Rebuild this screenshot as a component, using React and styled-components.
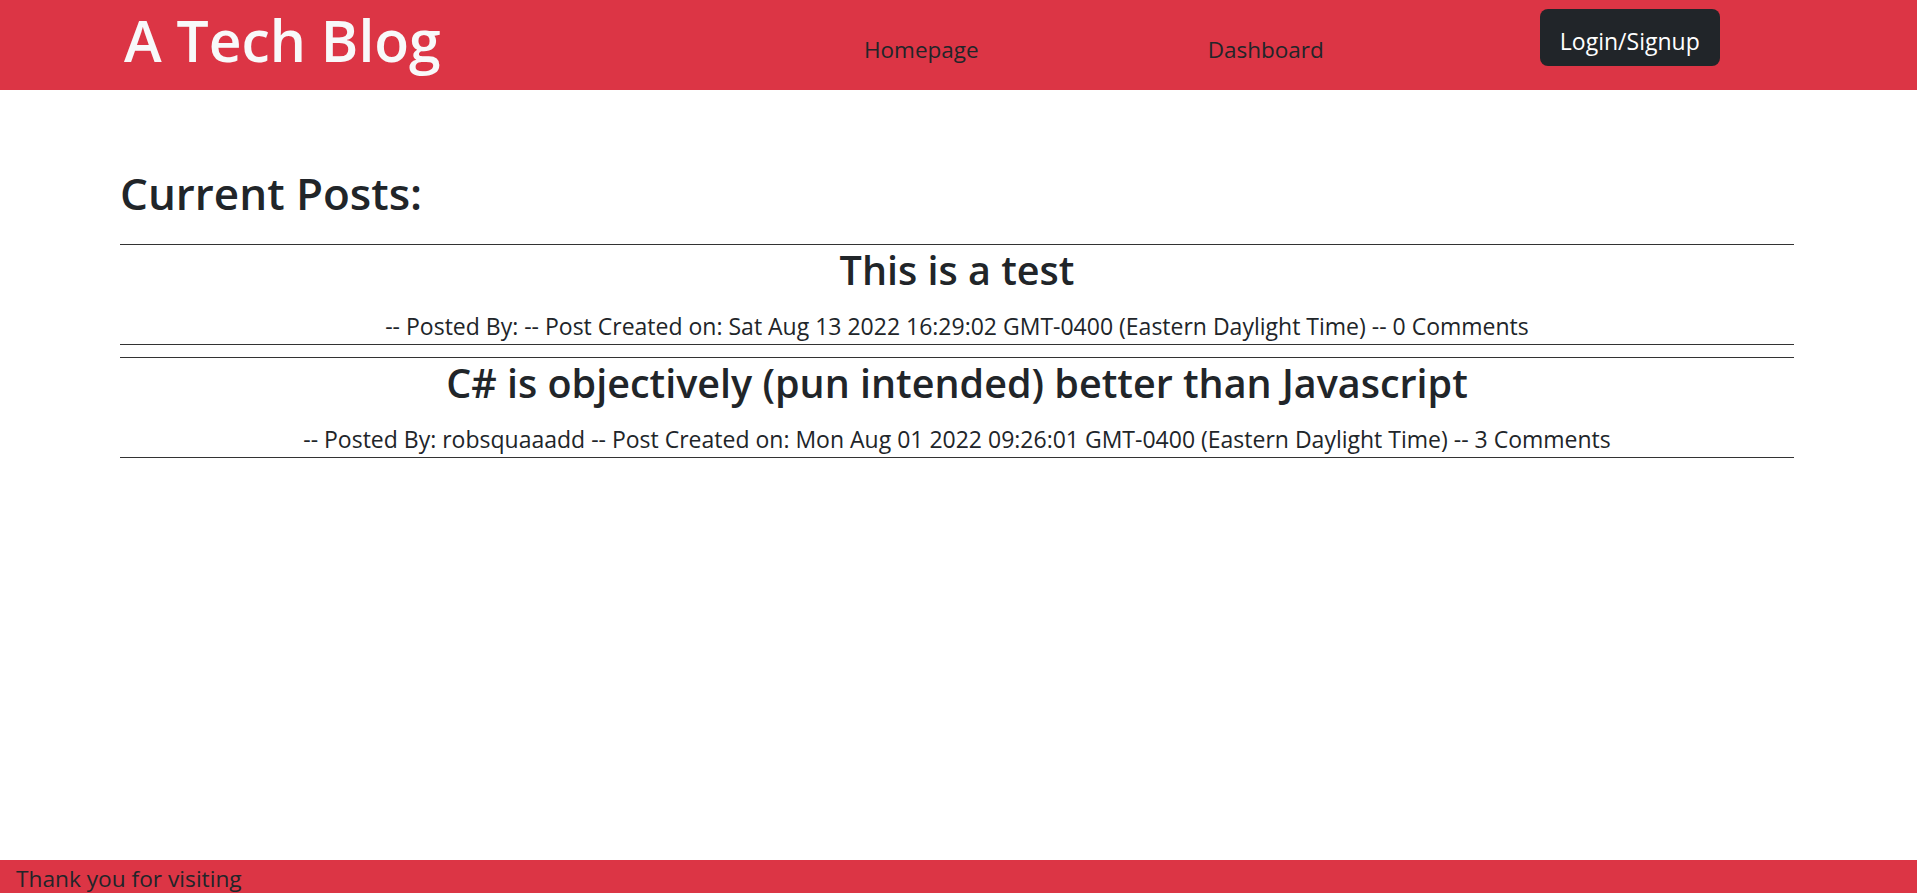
import React from 'react';
import styled, { createGlobalStyle } from 'styled-components';

const GlobalStyle = createGlobalStyle`
  html, body {
    margin: 0;
    padding: 0;
    background: #fff;
  }
  body {
    font-family: "Open Sans", "Liberation Sans", sans-serif;
    color: #212529;
  }
  * {
    box-sizing: border-box;
  }
`;

const Page = styled.div`
  min-height: 100vh;
  display: flex;
  flex-direction: column;
`;

const Header = styled.header`
  background-color: #dc3545;
  height: 90px;
  display: flex;
  align-items: flex-start;
  padding-left: 124px;
`;

const Brand = styled.h1`
  margin: 6px 0 0;
  flex: 0 0 740px;
  font-size: 57px;
  line-height: 1.2;
  font-weight: 600;
  color: #f8f9fa;
`;

const NavLink = styled.a`
  margin-top: 33px;
  margin-right: ${props => props.gap}px;
  font-size: 22.5px;
  line-height: 1.5;
  color: #212529;
  text-decoration: none;
`;

const LoginButton = styled.button`
  margin-top: 9px;
  height: 57px;
  padding: 6px 20px 0;
  border: none;
  border-radius: 8px;
  background-color: #212529;
  color: #fff;
  font-family: inherit;
  font-size: 23px;
`;

const Main = styled.main`
  flex: 1;
  padding: 77px 123px 0 120px;
`;

const PageTitle = styled.h2`
  margin: 0 0 24px;
  font-size: 44px;
  line-height: 1.2;
  font-weight: 600;
`;

const Post = styled.article`
  border-top: 1px solid #333;
  border-bottom: 1px solid #333;
  margin-bottom: 12px;
  padding: 2px 0 0;
  text-align: center;
`;

const PostTitle = styled.h3`
  margin: 0 0 15px;
  font-size: 39.5px;
  line-height: 1.2;
  font-weight: 600;
`;

const PostMeta = styled.p`
  margin: 0;
  font-size: 23px;
  line-height: 1.5;
`;

const Footer = styled.footer`
  background-color: #dc3545;
  height: 33px;
  padding: 2px 0 0 16px;
  font-size: 22.7px;
  line-height: 1.5;
  overflow: hidden;
`;

const posts = [
  {
    title: 'This is a test',
    author: '',
    date: 'Sat Aug 13 2022 16:29:02 GMT-0400 (Eastern Daylight Time)',
    comments: 0,
  },
  {
    title: 'C# is objectively (pun intended) better than Javascript',
    author: 'robsquaaadd',
    date: 'Mon Aug 01 2022 09:26:01 GMT-0400 (Eastern Daylight Time)',
    comments: 3,
  },
];

const App = () => {
  return (
    <Page>
      <GlobalStyle />
      <Header>
        <Brand>A Tech Blog</Brand>
        <NavLink href="#" gap={229}>Homepage</NavLink>
        <NavLink href="#" gap={216}>Dashboard</NavLink>
        <LoginButton>Login/Signup</LoginButton>
      </Header>
      <Main>
        <PageTitle>Current Posts:</PageTitle>
        {posts.map((post, i) => (
          <Post key={i}>
            <PostTitle>{post.title}</PostTitle>
            <PostMeta>
              -- Posted By: {post.author} -- Post Created on: {post.date} -- {post.comments} Comments
            </PostMeta>
          </Post>
        ))}
      </Main>
      <Footer>Thank you for visiting</Footer>
    </Page>
  );
};

export default App;
